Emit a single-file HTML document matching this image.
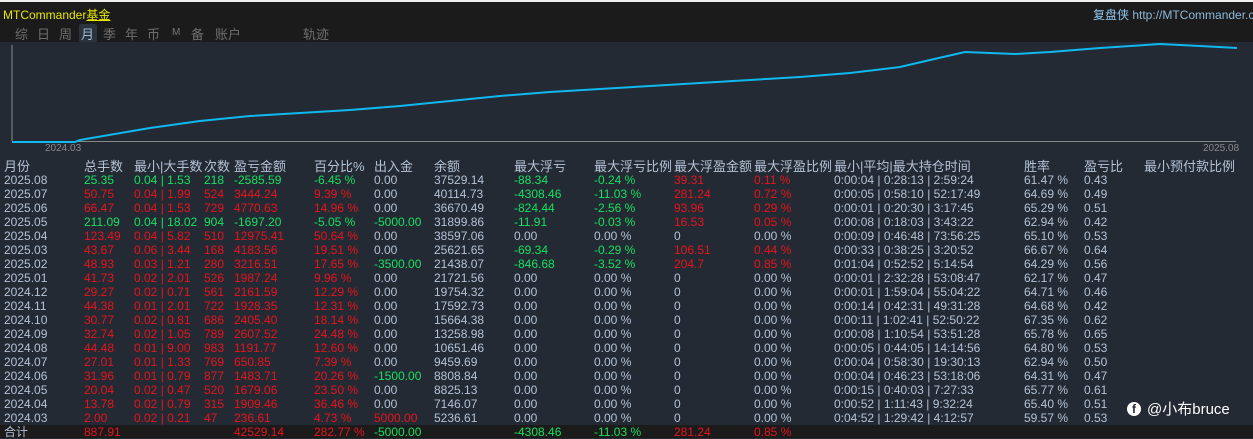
<!DOCTYPE html><html><head><meta charset="utf-8"><style>
body{margin:0;width:1253px;height:438px;overflow:hidden;background:#232a33;font-family:"Liberation Sans","Noto Sans CJK SC",sans-serif;font-size:12px;color:#b4c2d6;position:relative}
.top{position:absolute;left:0;top:0;width:1253px;height:42px;background:#1b1b1b;border-top:2px solid #eee;box-sizing:border-box}
.a{position:absolute;white-space:nowrap}
.nav{position:absolute;top:22px;font-size:13px;color:#6e6e6e}
.row{position:absolute;left:4px;display:flex;height:14px;line-height:14px;white-space:nowrap}
.row span{display:inline-block;overflow:visible}
.h{font-size:13px;color:#b4c2d6}
.r{color:#e8141c}.g{color:#17e05f}
.tot{position:absolute;left:0;top:425px;width:1253px;height:13px;background:#1b1b1b}
</style></head><body>
<div class="top">
<div class="a" style="left:3px;top:4px;font-size:12px;color:#e8e800">MTCommander<u>基金</u></div>
<div class="a" style="left:1093px;top:4px;font-size:12px;color:#8fc8f0">复盘侠 <span style="color:#8fb8d8">http://MTCommander.com</span></div>
<div class="a" style="left:79px;top:22px;width:18px;height:18px;background:#2a323c;border-radius:2px"></div>
<span class="nav" style="left:15px">综</span><span class="nav" style="left:37px">日</span><span class="nav" style="left:59px">周</span><span class="nav" style="left:81px;color:#9fb8d8">月</span><span class="nav" style="left:103px">季</span><span class="nav" style="left:125px">年</span><span class="nav" style="left:147px">币</span><span class="nav" style="left:172px;font-size:10px;top:25px;color:#777">M</span><span class="nav" style="left:191px">备</span><span class="nav" style="left:215px">账户</span><span class="nav" style="left:303px">轨迹</span>
</div>
<svg class="a" style="left:0;top:0" width="1253" height="160">
<line x1="12" y1="45" x2="12" y2="141" stroke="#888" stroke-width="1"/>
<line x1="12" y1="141.5" x2="1236" y2="141.5" stroke="#888" stroke-width="1"/>
<polyline fill="none" stroke="#10b8f0" stroke-width="2" points="12,142 75,142 80,140 150,128 200,121 250,116 300,113 350,110 400,106 450,101 500,96 550,92 600,89 650,86 700,83 750,80 800,77 850,73 900,67 930,60 965,52 1015,54 1050,52 1100,48 1160,44 1200,46 1237,48"/>
<text x="45" y="151" fill="#888" font-size="10" font-family="Liberation Sans">2024.03</text>
<text x="1203" y="151" fill="#888" font-size="10" font-family="Liberation Sans">2025.08</text>
</svg>
<div class="tot"></div>
<div id="t"></div>
<div class="a" style="left:1127px;top:398px;color:#fff;font-size:15px;display:flex;align-items:center"><span style="display:inline-block;width:14px;height:14px;border-radius:50%;background:#fff;color:#232a33;font-size:12px;font-weight:bold;text-align:center;line-height:15px;margin-right:6px">f</span>@小布bruce</div>
<script>
var W=[80,50,70,30,80,60,60,80,80,80,80,80,190,60,60,110];
var H=["月份","总手数","最小|大手数","次数","盈亏金额","百分比%","出入金","余额","最大浮亏","最大浮亏比例","最大浮盈金额","最大浮盈比例","最小|平均|最大持仓时间","胜率","盈亏比","最小预付款比例"];
var D=[
["2025.08","g25.35","g0.04 | 1.53","g218","g-2585.59","g-6.45 %","0.00","37529.14","g-88.34","g-0.24 %","r39.31","r0.11 %","0:00:04 | 0:28:13 | 2:59:24","61.47 %","0.43"],
["2025.07","r50.75","r0.04 | 1.99","r524","r3444.24","r9.39 %","0.00","40114.73","g-4308.46","g-11.03 %","r281.24","r0.72 %","0:00:05 | 0:58:10 | 52:17:49","64.69 %","0.49"],
["2025.06","r66.47","r0.04 | 1.53","r729","r4770.63","r14.96 %","0.00","36670.49","g-824.44","g-2.56 %","r93.96","r0.29 %","0:00:01 | 0:20:30 | 3:17:45","65.29 %","0.51"],
["2025.05","g211.09","g0.04 | 18.02","g904","g-1697.20","g-5.05 %","g-5000.00","31899.86","g-11.91","g-0.03 %","r16.53","r0.05 %","0:00:08 | 0:18:03 | 3:43:22","62.94 %","0.42"],
["2025.04","r123.49","r0.04 | 5.82","r510","r12975.41","r50.64 %","0.00","38597.06","0.00","0.00 %","0","0.00 %","0:00:09 | 0:46:48 | 73:56:25","65.10 %","0.53"],
["2025.03","r43.67","r0.06 | 3.44","r168","r4183.56","r19.51 %","0.00","25621.65","g-69.34","g-0.29 %","r106.51","r0.44 %","0:00:33 | 0:38:25 | 3:20:52","66.67 %","0.64"],
["2025.02","r48.93","r0.03 | 1.21","r280","r3216.51","r17.65 %","g-3500.00","21438.07","g-846.68","g-3.52 %","r204.7","r0.85 %","0:01:04 | 0:52:52 | 5:14:54","64.29 %","0.56"],
["2025.01","r41.73","r0.02 | 2.01","r526","r1987.24","r9.96 %","0.00","21721.56","0.00","0.00 %","0","0.00 %","0:00:01 | 2:32:28 | 53:08:47","62.17 %","0.47"],
["2024.12","r29.27","r0.02 | 0.71","r561","r2161.59","r12.29 %","0.00","19754.32","0.00","0.00 %","0","0.00 %","0:00:01 | 1:59:04 | 55:04:22","64.71 %","0.46"],
["2024.11","r44.38","r0.01 | 2.01","r722","r1928.35","r12.31 %","0.00","17592.73","0.00","0.00 %","0","0.00 %","0:00:14 | 0:42:31 | 49:31:28","64.68 %","0.42"],
["2024.10","r30.77","r0.02 | 0.81","r686","r2405.40","r18.14 %","0.00","15664.38","0.00","0.00 %","0","0.00 %","0:00:11 | 1:02:41 | 52:50:22","67.35 %","0.62"],
["2024.09","r32.74","r0.02 | 1.05","r789","r2607.52","r24.48 %","0.00","13258.98","0.00","0.00 %","0","0.00 %","0:00:08 | 1:10:54 | 53:51:28","65.78 %","0.65"],
["2024.08","r44.48","r0.01 | 9.00","r983","r1191.77","r12.60 %","0.00","10651.46","0.00","0.00 %","0","0.00 %","0:00:05 | 0:44:05 | 14:14:56","64.80 %","0.53"],
["2024.07","r27.01","r0.01 | 1.33","r769","r650.85","r7.39 %","0.00","9459.69","0.00","0.00 %","0","0.00 %","0:00:04 | 0:58:30 | 19:30:13","62.94 %","0.50"],
["2024.06","r31.96","r0.01 | 0.79","r877","r1483.71","r20.26 %","g-1500.00","8808.84","0.00","0.00 %","0","0.00 %","0:00:04 | 0:46:23 | 53:18:06","64.31 %","0.47"],
["2024.05","r20.04","r0.02 | 0.47","r520","r1679.06","r23.50 %","0.00","8825.13","0.00","0.00 %","0","0.00 %","0:00:15 | 0:40:03 | 7:27:33","65.77 %","0.61"],
["2024.04","r13.78","r0.02 | 0.79","r315","r1909.46","r36.46 %","0.00","7146.07","0.00","0.00 %","0","0.00 %","0:00:52 | 1:11:43 | 9:32:24","65.40 %","0.51"],
["2024.03","r2.00","r0.02 | 0.21","r47","r236.61","r4.73 %","r5000.00","5236.61","0.00","0.00 %","0","0.00 %","0:04:52 | 1:29:42 | 4:12:57","59.57 %","0.53"],
["合计","r887.91","","","r42529.14","r282.77 %","g-5000.00","","g-4308.46","g-11.03 %","r281.24","r0.85 %","","",""]];
var h='<div class="row h" style="top:160px">';H.forEach(function(x,i){h+='<span style="width:'+W[i]+'px">'+x+'</span>'});h+='</div>';
D.forEach(function(r,j){var y=j<18?173+j*14:425;h+='<div class="row" style="top:'+y+'px">';r.forEach(function(c,i){var cl='';if(c[0]=='r'||c[0]=='g'){cl=c[0];c=c.slice(1)}h+='<span class="'+cl+'" style="width:'+W[i]+'px">'+c+'</span>'});h+='</div>'});
document.getElementById('t').innerHTML=h;
</script>
</body></html>
